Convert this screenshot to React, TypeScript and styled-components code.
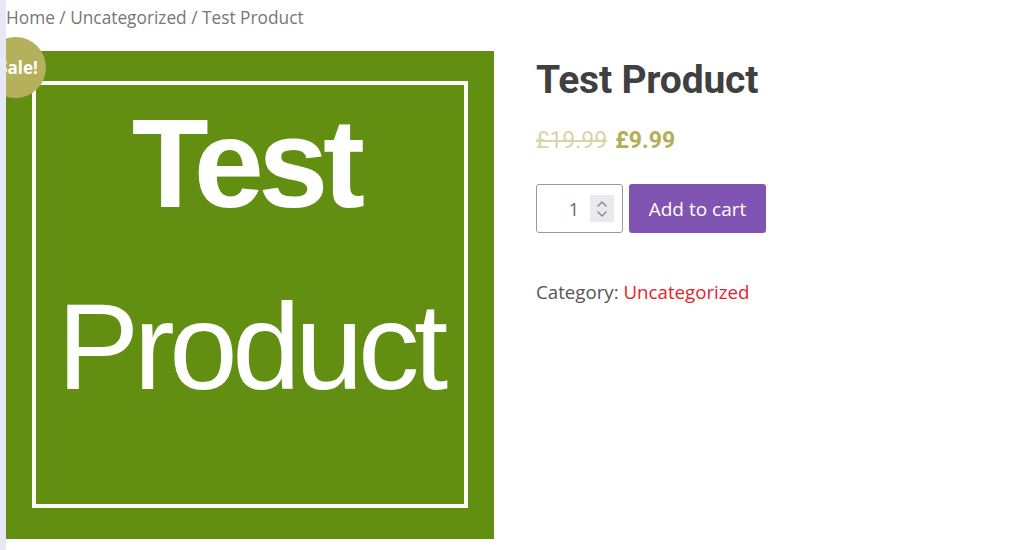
import styled, { createGlobalStyle } from "styled-components";

const GlobalStyle = createGlobalStyle`
  html, body {
    margin: 0;
    padding: 0;
    background: #fff;
  }
  body {
    font-family: "Segoe UI", "Open Sans", "Noto Sans", sans-serif;
    color: #555;
  }
`;

const Page = styled.div`
  display: flex;
  width: 1024px;
  height: 550px;
  overflow: hidden;
`;

const SideStrip = styled.div`
  flex: 0 0 6px;
  background: #e6e8f6;
  position: relative;
  z-index: 2;
`;

const Main = styled.main`
  flex: 1;
  display: flex;
  flex-direction: column;
  overflow: hidden;
`;

const Breadcrumb = styled.nav`
  font-size: 17.3px;
  line-height: 22px;
  color: #777;
  padding-top: 7px;
  height: 51px;
  box-sizing: border-box;

  a {
    color: inherit;
    text-decoration: none;
  }
`;

const ProductRow = styled.section`
  display: flex;
  align-items: flex-start;
  gap: 42px;
`;

const Gallery = styled.div`
  position: relative;
  flex: 0 0 488px;
  height: 488px;
`;

const ProductImage = styled.div`
  width: 100%;
  height: 100%;
  background: #628f12;
  padding: 30px 26px 31px 26px;
  box-sizing: border-box;
`;

const Frame = styled.div`
  height: 100%;
  border: 4.5px solid #fbfdf6;
  box-sizing: border-box;
  display: flex;
  flex-direction: column;
  align-items: center;
  color: #fff;
  font-family: "Liberation Sans", Arial, sans-serif;
  line-height: 1;
`;

const ImageWord = styled.div<{ $bold?: boolean; $size: number; $spacing: number; $top: number; $shift?: number }>`
  font-weight: ${({ $bold }) => ($bold ? 700 : 400)};
  font-size: ${({ $size }) => $size}px;
  letter-spacing: ${({ $spacing }) => $spacing}px;
  margin-top: ${({ $top }) => $top}px;
  margin-right: ${({ $shift = 0 }) => $shift}px;
  white-space: nowrap;
`;

const SaleBadge = styled.span`
  position: absolute;
  left: -21px;
  top: -14px;
  width: 61px;
  height: 61px;
  border-radius: 50%;
  background: #b4b05b;
  color: #fff;
  font-weight: 700;
  font-size: 17px;
  padding-left: 5px;
  box-sizing: border-box;
  display: flex;
  align-items: center;
  justify-content: center;
  z-index: 1;
`;

const Summary = styled.div`
  display: flex;
  flex-direction: column;
  padding-top: 4px;
`;

const Title = styled.h1`
  margin: 0;
  font-family: "Roboto", "Inter", sans-serif;
  font-weight: 700;
  font-size: 39px;
  line-height: 50px;
  color: #404040;
  letter-spacing: -0.2px;
`;

const Price = styled.p`
  margin: 21px 0 0;
  font-family: "Roboto", "Inter", sans-serif;
  font-size: 23px;
  line-height: 30px;
  display: flex;
  gap: 8px;
`;

const OldPrice = styled.del`
  color: #d7d5a9;
  font-weight: 400;
`;

const NewPrice = styled.ins`
  text-decoration: none;
  color: #b4ae58;
  font-weight: 700;
`;

const CartForm = styled.form`
  display: flex;
  gap: 6px;
  margin-top: 28px;
`;

const QtyBox = styled.div`
  width: 87px;
  height: 49px;
  box-sizing: border-box;
  border: 1px solid #9a9a9a;
  border-radius: 3px;
  display: flex;
  align-items: center;
  justify-content: flex-end;
  padding-right: 8px;
  gap: 11px;
  color: #666;
  font-size: 18px;
`;

const Spinner = styled.span`
  width: 24px;
  height: 27px;
  background: #e9e9ee;
  display: flex;
  align-items: center;
  justify-content: center;
`;

const CartButton = styled.button`
  height: 49px;
  width: 137px;
  border: none;
  border-radius: 3px;
  background: #7f54b3;
  color: #fff;
  font-family: inherit;
  font-size: 19px;
  cursor: pointer;
`;

const Meta = styled.p`
  margin: 47px 0 0;
  font-size: 18.7px;
  line-height: 24px;
  color: #555;

  a {
    color: #e7222e;
    text-decoration: none;
  }
`;

export default function App() {
  return (
    <>
      <GlobalStyle />
      <Page>
        <SideStrip />
        <Main>
          <Breadcrumb>
            <a href="#">Home</a> / <a href="#">Uncategorized</a> / Test Product
          </Breadcrumb>
          <ProductRow>
            <Gallery>
              <SaleBadge>Sale!</SaleBadge>
              <ProductImage>
                <Frame>
                  <ImageWord $bold $size={126} $spacing={-5.5} $top={16} $shift={9}>
                    Test
                  </ImageWord>
                  <ImageWord $size={123} $spacing={-5.5} $top={58}>
                    Product
                  </ImageWord>
                </Frame>
              </ProductImage>
            </Gallery>
            <Summary>
              <Title>Test Product</Title>
              <Price>
                <OldPrice>£19.99</OldPrice>
                <NewPrice>£9.99</NewPrice>
              </Price>
              <CartForm onSubmit={(e) => e.preventDefault()}>
                <QtyBox>
                  1
                  <Spinner>
                    <svg width="12" height="20" viewBox="0 0 12 20" fill="none" stroke="#888" strokeWidth="1.4" strokeLinecap="round" strokeLinejoin="round">
                      <path d="M2 7l4-4 4 4" />
                      <path d="M2 13l4 4 4-4" />
                    </svg>
                  </Spinner>
                </QtyBox>
                <CartButton type="submit">Add to cart</CartButton>
              </CartForm>
              <Meta>
                Category: <a href="#">Uncategorized</a>
              </Meta>
            </Summary>
          </ProductRow>
        </Main>
      </Page>
    </>
  );
}
